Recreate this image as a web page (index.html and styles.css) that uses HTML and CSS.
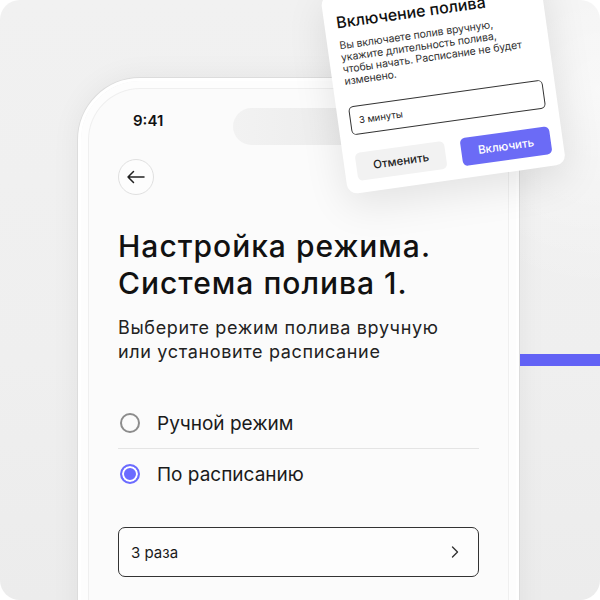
FILE: index.html
```html
<!DOCTYPE html>
<html lang="ru">
<head>
<meta charset="utf-8">
<title>Настройка режима</title>
<link rel="stylesheet" href="styles.css">
</head>
<body>
<div class="canvas">
  <div class="phone">
    <div class="status">
      <span class="time">9:41</span>
      <span class="island"></span>
    </div>
    <div class="content">
      <button class="back" type="button" aria-label="Назад">
        <svg width="36" height="36" viewBox="0 0 36 36"><path d="M26 18H10M15.5 12.5L10 18l5.5 5.5" fill="none" stroke="#222" stroke-width="1.5" stroke-linecap="round" stroke-linejoin="round"/></svg>
      </button>
      <h1 class="title">Настройка режима.<br>Система полива 1.</h1>
      <p class="subtitle">Выберите режим полива вручную<br>или установите расписание</p>
      <div class="options">
        <div class="option"><span class="radio"></span><span class="label">Ручной режим</span></div>
        <div class="divider"></div>
        <div class="option"><span class="radio checked"></span><span class="label">По расписанию</span></div>
      </div>
      <div class="select">
        <span class="select-text">3 раза</span>
        <svg width="8" height="12" viewBox="0 0 8 12"><path d="M1.5 1l5 5-5 5" fill="none" stroke="#333" stroke-width="1.4" stroke-linecap="round" stroke-linejoin="round"/></svg>
      </div>
    </div>
  </div>
  <div class="accent-bar"></div>
  <div class="dialog">
    <div class="dialog-title">Включение полива</div>
    <div class="dialog-text">Вы включаете полив вручную,<br>укажите длительность полива,<br>чтобы начать. Расписание не будет<br>изменено.</div>
    <div class="dialog-input">3 минуты</div>
    <div class="dialog-actions">
      <button class="btn btn-cancel" type="button">Отменить</button>
      <button class="btn btn-ok" type="button">Включить</button>
    </div>
  </div>
</div>
</body>
</html>
```

FILE: styles.css
```css
* { box-sizing: border-box; }
html, body { margin: 0; padding: 0; background: #ffffff; }
body { font-family: Inter, "Noto Sans", sans-serif; color: #1a1a1a; }

.canvas {
  position: relative;
  width: 600px;
  height: 600px;
  overflow: hidden;
  border-radius: 20px;
  background:
    radial-gradient(circle at 100% 15%, rgba(255,255,255,0.55) 0, rgba(255,255,255,0) 200px),
    linear-gradient(180deg, #f1f1f1 0%, #efefef 60%, #ececec 100%);
  padding: 78px 0 0 78px;
}

.phone {
  width: 441px;
  height: 620px;
  border: 3px solid #ffffff;
  border-radius: 62px;
  background: #fbfbfb;
  box-shadow: 0 0 0 1px #dcdcdc, inset 0 0 0 7px #fdfdfd, inset 0 0 0 8px #efefef, 0 0 30px rgba(0,0,0,0.06);
}

.status {
  display: flex;
  align-items: flex-start;
  padding: 27px 0 0 52px;
}
.time {
  width: 100px;
  margin-top: 4px;
  font-size: 15px;
  line-height: 18px;
  font-weight: 600;
  color: #111;
}
.island {
  width: 131px;
  height: 37px;
  border-radius: 19px;
  background: linear-gradient(90deg, #f2f2f2, #ebebeb);
}

.content {
  padding: 14px 37px 0 37px;
}

.back {
  display: block;
  width: 36px;
  height: 36px;
  padding: 0;
  border: 1px solid #e0e0e0;
  border-radius: 50%;
  background: #fdfdfd;
}
.back svg { display: block; margin: -1px; }

.title {
  margin: 33px 0 0 0;
  font-size: 30px;
  line-height: 37px;
  font-weight: 500;
  color: #111;
  letter-spacing: 1px;
}

.subtitle {
  margin: 14px 0 0 0;
  font-size: 18px;
  line-height: 24px;
  font-weight: 400;
  color: #222;
  letter-spacing: 0.65px;
}

.options { margin-top: 34px; }
.option {
  display: flex;
  align-items: center;
  height: 50px;
}
.radio {
  width: 20px;
  height: 20px;
  margin-left: 2px;
  border: 2px solid #8c8c8c;
  border-radius: 50%;
}
.radio.checked {
  border-color: #6b6bff;
  background: #6b6bff;
  box-shadow: inset 0 0 0 2px #ffffff;
}
.label {
  margin-left: 17px;
  font-size: 19px;
  color: #1a1a1a;
}
.divider {
  height: 1px;
  background: #e4e4e4;
}

.select {
  display: flex;
  align-items: center;
  justify-content: space-between;
  height: 50px;
  margin-top: 28px;
  padding: 0 19px 0 12px;
  border: 1.5px solid #333;
  border-radius: 7px;
  background: #fdfdfd;
}
.select-text { font-size: 15px; color: #1a1a1a; }
.select svg { display: block; }

.accent-bar {
  position: absolute;
  left: 520px;
  top: 354px;
  width: 80px;
  height: 12px;
  background: #6262f5;
}

.dialog {
  position: absolute;
  left: 337px;
  top: -20px;
  width: 220px;
  height: 200px;
  padding: 18px 12px 12px 12px;
  background: #ffffff;
  border-radius: 10px;
  box-shadow: 0 12px 40px rgba(0,0,0,0.10);
  transform-origin: 110px 127px;
  transform: rotate(-8deg);
}
.dialog-title {
  font-size: 16px;
  line-height: 20px;
  font-weight: 500;
  color: #111;
  white-space: nowrap;
}
.dialog-text {
  margin-top: 7.5px;
  font-size: 10.5px;
  line-height: 12.3px;
  letter-spacing: -0.1px;
  color: #333;
  white-space: nowrap;
}
.dialog-input {
  display: flex;
  align-items: center;
  height: 29px;
  margin-top: 18px;
  padding-left: 8px;
  border: 1px solid #333;
  border-radius: 5px;
  font-size: 9.5px;
  color: #222;
}
.dialog-actions {
  display: flex;
  justify-content: space-between;
  margin-top: 18px;
}
.btn {
  width: 90px;
  height: 28px;
  border: 0;
  border-radius: 5px;
  font-family: Inter, "Noto Sans", sans-serif;
  font-size: 11.5px;
  font-weight: 500;
}
.btn-cancel { background: #f2f2f2; color: #222; }
.btn-ok { background: #6b6bf6; color: #ffffff; }
```
